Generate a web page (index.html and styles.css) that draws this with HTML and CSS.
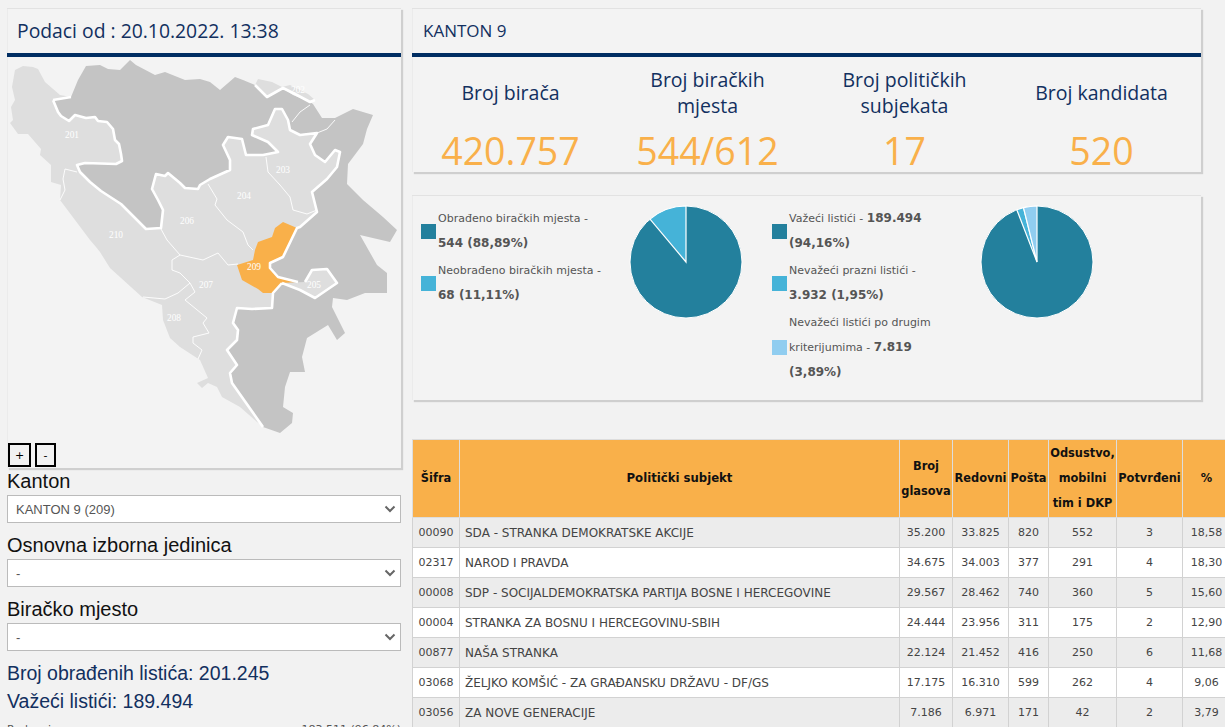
FILE: index.html
```html
<!DOCTYPE html>
<html lang="bs">
<head>
<meta charset="utf-8">
<title>Izbori - Kanton 9</title>
<link rel="stylesheet" href="styles.css">
</head>
<body>
<div class="page">
  <aside class="left">
    <section class="card map-card">
      <h2 class="card-head head-lg">Podaci od : 20.10.2022. 13:38</h2>
      <div class="map-wrap">
        <svg class="map" viewBox="8 57 392 411" width="392" height="411">
          <path class="light" d="M15 70L23 66L33 67L38 69L45 82L60 95L71 97L285 105L340 130L345 200L290 350L265 427L257 422L240 407L222 397L217 387L208 383L202 388L197 383L208 378L200 360L180 347L170 338L163 320L162 305L142 297L110 268L100 252L96 247L90 240L75 220L60 200L61 185L51 182L51 165L40 155L41 149L28 134L18 134L10 123L13 120L11 107L15 100L12 87Z"/>
          <path class="light" d="M258 79L272 82L282 87L290 85L308 94L315 100L310 102L297 95L283 88L267 97L255 85Z"/>
          <path class="dark" d="M53 100L71 97L78 80L86 66L100 65L108 69L120 70L130 60L136 65L155 75L165 72L185 80L200 79L210 82L220 90L235 77L243 80L255 85L267 97L282 88L293 95L310 102L313 104L322 118L335 118L353 109L373 115L367 129L363 144L348 164L347 184L363 200L383 217L397 230L390 242L360 235L377 265L387 273L387 293L365 293L347 300L333 298L332 307L345 333L337 340L328 325L307 338L302 357L305 372L290 372L285 387L283 407L293 413L292 423L280 433L263 427L232 383L230 373L237 365L227 350L237 340L238 330L233 323L237 308L252 309L272 308L273 293L282 283L298 282L278 277L270 268L270 263L283 257L297 228L300 227L317 212L312 192L327 179L337 167L340 152L335 150L325 162L315 155L310 144L317 133L300 135L290 130L288 120L282 109L275 109L268 125L253 129L252 135L268 142L278 152L263 155L246 155L242 139L228 137L223 145L230 160L230 170L210 179L200 185L198 189L185 188L180 183L168 173L165 176L156 174L152 189L158 200L163 210L161 228L146 229L140 223L121 204L101 191L90 182L80 172L77 165L85 163L116 164L122 161L121 154L119 144L115 140L113 129L107 122L98 121L95 117L86 118L75 115L69 121L61 116L58 112Z"/>
          <path class="light" d="M282 283L300 290L315 298L337 283L327 269L312 270L305 282Z"/>
          <path class="orange" d="M283 222L297 228L283 257L270 263L270 268L278 277L298 282L282 283L273 293L263 293L258 289L242 280L237 265L253 260L255 250L258 242L272 237L275 228Z"/>
          <path class="bound" d="M53 100L58 112L61 116L69 121L75 115L86 118L95 117L98 121L107 122L113 129L115 140L119 144L121 154L122 161L116 164L85 163L77 165L80 172L90 182L101 191L121 204L140 223L146 229L161 228L163 210L158 200L152 189L156 174L165 176L168 173L180 183L185 188L198 189L200 185L210 179L230 170L230 160L223 145L228 137L242 139L246 155L263 155L278 152L268 142L252 135L253 129L268 125L275 109L282 109L288 120L290 130L300 135L317 133L310 144L315 155L325 162L335 150L340 152L337 167L327 179L312 192L317 212L300 227L297 228L283 257L270 263L270 268L278 277L298 282M53 100L71 97M282 283L273 293L272 308L252 309L237 308L233 323L238 330L237 340L227 350L237 365L230 373L232 383L263 427M282 283L300 290L315 298L337 283L327 269L312 270L305 282M255 85L267 97L283 88L297 95L310 102L315 100"/>
          <path class="thin" d="M77 172L65 169L63 179L65 190L60 200M161 229L167 240L180 255L172 260L172 270L180 273L190 283L178 293L165 299L143 297M180 255L203 260L218 253L228 265L238 264M208 184L217 199L215 205L227 220L243 232L248 245L253 250M266 157L268 172L280 185L290 197L293 210L307 214L317 210M190 283L195 292L185 300L207 318L203 323L209 333L193 337L193 343L202 350L198 359M310 105L300 112L292 122M317 133L327 129L335 120"/>
          <text class="map-label" x="72" y="138" textLength="14" lengthAdjust="spacingAndGlyphs">201</text>
          <text class="map-label" x="298" y="93" textLength="14" lengthAdjust="spacingAndGlyphs">202</text>
          <text class="map-label" x="283" y="173" textLength="14" lengthAdjust="spacingAndGlyphs">203</text>
          <text class="map-label" x="244" y="199" textLength="14" lengthAdjust="spacingAndGlyphs">204</text>
          <text class="map-label" x="314" y="288" textLength="14" lengthAdjust="spacingAndGlyphs">205</text>
          <text class="map-label" x="187" y="224" textLength="14" lengthAdjust="spacingAndGlyphs">206</text>
          <text class="map-label" x="206" y="288" textLength="14" lengthAdjust="spacingAndGlyphs">207</text>
          <text class="map-label" x="174" y="321" textLength="14" lengthAdjust="spacingAndGlyphs">208</text>
          <text class="map-label" x="254" y="270" textLength="14" lengthAdjust="spacingAndGlyphs">209</text>
          <text class="map-label" x="116" y="238" textLength="14" lengthAdjust="spacingAndGlyphs">210</text>
        </svg>
        <div class="zoom">
          <button class="zoom-btn zoom-plus" type="button">+</button>
          <button class="zoom-btn zoom-minus" type="button">-</button>
        </div>
      </div>
    </section>
    <form class="filters">
      <label class="f-label">Kanton</label>
      <select class="f-select"><option>KANTON 9 (209)</option></select>
      <label class="f-label">Osnovna izborna jedinica</label>
      <select class="f-select"><option>-</option></select>
      <label class="f-label">Biračko mjesto</label>
      <select class="f-select"><option>-</option></select>
    </form>
    <p class="stat stat-first">Broj obrađenih listića: 201.245</p>
    <p class="stat">Važeći listići: 189.494</p>
    <div class="small-row"><span>Redovni</span><span>183.511 (96,84%)</span></div>
  </aside>

  <main class="right">
    <section class="card kpi-card">
      <h2 class="card-head head-sm">KANTON 9</h2>
      <div class="kpis">
        <div class="kpi"><div class="kpi-title">Broj birača</div><div class="kpi-value">420.757</div></div>
        <div class="kpi"><div class="kpi-title">Broj biračkih<br>mjesta</div><div class="kpi-value">544/612</div></div>
        <div class="kpi"><div class="kpi-title">Broj političkih<br>subjekata</div><div class="kpi-value">17</div></div>
        <div class="kpi"><div class="kpi-title">Broj kandidata</div><div class="kpi-value">520</div></div>
      </div>
    </section>

    <section class="card charts">
      <div class="chart-block">
        <ul class="legend">
          <li class="leg-item"><i class="sw sw1"></i><span>Obrađeno biračkih mjesta -<br><b>544 (88,89%)</b></span></li>
          <li class="leg-item"><i class="sw sw2"></i><span>Neobrađeno biračkih mjesta -<br><b>68 (11,11%)</b></span></li>
        </ul>
        <svg class="pie" viewBox="-57 -57 114 114" width="114" height="114">
          <circle class="p1" r="56"/>
          <path class="p2" d="M0 0L-36 -42.9A56 56 0 0 1 0 -56Z"/>
        </svg>
      </div>
      <div class="chart-block chart-second">
        <ul class="legend">
          <li class="leg-item"><i class="sw sw1"></i><span>Važeći listići - <b>189.494<br>(94,16%)</b></span></li>
          <li class="leg-item"><i class="sw sw2"></i><span>Nevažeći prazni listići -<br><b>3.932 (1,95%)</b></span></li>
          <li class="leg-item"><i class="sw sw3"></i><span>Nevažeći listići po drugim<br>kriterijumima - <b>7.819<br>(3,89%)</b></span></li>
        </ul>
        <svg class="pie" viewBox="-57 -57 114 114" width="114" height="114">
          <circle class="p1" r="56"/>
          <path class="p2" d="M0 0L-20.2 -52.2A56 56 0 0 1 -13.5 -54.3Z"/>
          <path class="p3" d="M0 0L-13.5 -54.3A56 56 0 0 1 0 -56Z"/>
        </svg>
      </div>
    </section>

    <table class="results">
      <colgroup>
        <col class="c1"><col class="c2"><col class="c3"><col class="c4"><col class="c5"><col class="c6"><col class="c7"><col class="c8">
      </colgroup>
      <thead>
        <tr><th>Šifra</th><th class="th-name">Politički subjekt</th><th>Broj<br>glasova</th><th>Redovni</th><th>Pošta</th><th>Odsustvo,<br>mobilni<br>tim i DKP</th><th>Potvrđeni</th><th>%</th></tr>
      </thead>
      <tbody>
        <tr><td class="code">00090</td><td class="name">SDA - STRANKA DEMOKRATSKE AKCIJE</td><td>35.200</td><td>33.825</td><td>820</td><td>552</td><td>3</td><td>18,58</td></tr>
        <tr><td class="code">02317</td><td class="name">NAROD I PRAVDA</td><td>34.675</td><td>34.003</td><td>377</td><td>291</td><td>4</td><td>18,30</td></tr>
        <tr><td class="code">00008</td><td class="name">SDP - SOCIJALDEMOKRATSKA PARTIJA BOSNE I HERCEGOVINE</td><td>29.567</td><td>28.462</td><td>740</td><td>360</td><td>5</td><td>15,60</td></tr>
        <tr><td class="code">00004</td><td class="name">STRANKA ZA BOSNU I HERCEGOVINU-SBIH</td><td>24.444</td><td>23.956</td><td>311</td><td>175</td><td>2</td><td>12,90</td></tr>
        <tr><td class="code">00877</td><td class="name">NAŠA STRANKA</td><td>22.124</td><td>21.452</td><td>416</td><td>250</td><td>6</td><td>11,68</td></tr>
        <tr><td class="code">03068</td><td class="name">ŽELJKO KOMŠIĆ - ZA GRAĐANSKU DRŽAVU - DF/GS</td><td>17.175</td><td>16.310</td><td>599</td><td>262</td><td>4</td><td>9,06</td></tr>
        <tr><td class="code">03056</td><td class="name">ZA NOVE GENERACIJE</td><td>7.186</td><td>6.971</td><td>171</td><td>42</td><td>2</td><td>3,79</td></tr>
      </tbody>
    </table>
  </main>
</div>
</body>
</html>
```

FILE: styles.css
```css
* { box-sizing: border-box; }
html, body { margin: 0; height: 727px; overflow: hidden; background: #f2f2f2; }
.page { display: flex; align-items: flex-start; gap: 11px; padding: 8px 0 0 7px; width: 1400px; }
.left { width: 394px; flex: none; }
.right { width: 789px; flex: none; }
.card { background: #f3f3f3; border-top: 1px solid #e2e2e2; box-shadow: inset 1px 0 0 #ebebeb, 2px 2px 1px #cfcfcf; }
.card-head { margin: 0; font-family: "Open Sans", sans-serif; font-weight: 400; color: #12305f; height: 48px; display: flex; align-items: center; border-bottom: 4px solid #002d62; padding-bottom: 1px; }
.head-lg { font-size: 19.35px; padding-left: 10px; }
.head-sm { font-size: 17px; padding-left: 11px; }
.map-wrap { position: relative; height: 411px; }
.map { display: block; margin-left: 1px; }
.light { fill: #dedede; }
.dark { fill: #c4c4c4; }
.orange { fill: #f9b04a; }
.bound { fill: none; stroke: #fff; stroke-width: 2.6; stroke-linejoin: round; }
.thin { fill: none; stroke: #fff; stroke-width: 0.9; }
.map-label { font-family: "Liberation Serif", serif; font-size: 11px; fill: #fff; text-anchor: middle; }
.zoom { position: absolute; left: 1px; bottom: 1px; display: flex; gap: 4px; }
.zoom-btn { height: 24px; padding: 0; border: 2px solid #000; background: #f2f2f2; color: #000; font-family: "DejaVu Sans", sans-serif; font-size: 11px; }
.zoom-plus { width: 23px; }
.zoom-minus { width: 21px; }
.filters { display: flex; flex-direction: column; margin-top: 2px; }
.f-label { font-family: "Liberation Sans", sans-serif; font-size: 20px; line-height: 23px; color: #111; margin-top: 11px; height: 23px; }
.f-label:first-child { margin-top: 0; }
.f-select { appearance: none; width: 394px; height: 28px; margin-top: 2px; padding: 0 8px; border: 1px solid #bbb; border-radius: 0; color: #555; font-family: "Liberation Sans", sans-serif; font-size: 13px; background: #fff url("data:image/svg+xml,%3Csvg xmlns='http://www.w3.org/2000/svg' width='12' height='8'%3E%3Cpath d='M1.5 1.5L6 6L10.5 1.5' fill='none' stroke='%23666' stroke-width='2'/%3E%3C/svg%3E") no-repeat right 4px center; }
.stat { margin: 0; font-family: "Liberation Sans", sans-serif; font-size: 19.5px; line-height: 28px; color: #12305f; }
.stat-first { margin-top: 8px; }
.small-row { display: flex; justify-content: space-between; font-family: "DejaVu Sans", sans-serif; font-size: 11px; line-height: 13px; color: #555; margin-top: 8px; }
.kpi-card { height: 164px; }
.kpis { display: grid; grid-template-columns: repeat(4, 197px); padding-top: 7px; }
.kpi { text-align: center; font-family: "Open Sans", sans-serif; }
.kpi-title { height: 58px; display: flex; align-items: center; justify-content: center; font-size: 19.5px; line-height: 26px; color: #12305f; }
.kpi-value { font-size: 37.5px; line-height: 44px; color: #f9b04a; margin-top: 7px; }
.charts { margin-top: 23px; height: 205px; display: flex; }
.chart-block { width: 360px; display: flex; padding: 10px 0 0 9px; }
.chart-second { padding-left: 0; }
.legend { list-style: none; margin: 0; padding: 0; width: 208px; flex: none; font-family: "DejaVu Sans", sans-serif; font-size: 11px; line-height: 25px; color: #555; }
.legend b { font-size: 12px; }
.leg-item { display: flex; align-items: center; margin-bottom: 2px; }
.sw { width: 15px; height: 15px; flex: none; margin-right: 2px; }
.sw1 { background: #23809d; }
.sw2 { background: #45b3d8; }
.sw3 { background: #90cdf0; }
.pie { flex: none; margin-top: -1px; }
.p1 { fill: #23809d; stroke: #fff; stroke-width: 1; }
.p2 { fill: #45b3d8; stroke: #fff; stroke-width: 1.2; }
.p3 { fill: #90cdf0; stroke: #fff; stroke-width: 1.2; }
.results { margin-top: 39px; border-collapse: collapse; table-layout: fixed; width: 818px; font-family: "DejaVu Sans", sans-serif; font-size: 11px; color: #444; }
.c1 { width: 47px; } .c2 { width: 440px; } .c3 { width: 53px; } .c4 { width: 56px; } .c5 { width: 40px; } .c6 { width: 68px; } .c7 { width: 66px; } .c8 { width: 48px; }
.results th { height: 78px; padding: 0; background: #f9b04a; color: #111; border: 1px solid #ddd; text-align: center; font-size: 11.4px; line-height: 25px; font-weight: 700; }
.results th.th-name { font-size: 11.7px; }
.results td { height: 30px; padding: 0; border: 1px solid #d2d2d2; text-align: center; background: #fff; }
.results tbody tr:nth-child(odd) td { background: #ececec; }
.results td.name { text-align: left; padding-left: 5px; font-size: 12px; }
```
